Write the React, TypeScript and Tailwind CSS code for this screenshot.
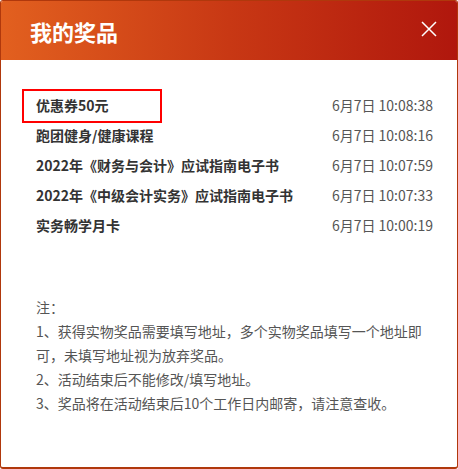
import React from "react";

const prizes = [
  { name: "优惠券50元", time: "6月7日 10:08:38" },
  { name: "跑团健身/健康课程", time: "6月7日 10:08:16" },
  { name: "2022年《财务与会计》应试指南电子书", time: "6月7日 10:07:59" },
  { name: "2022年《中级会计实务》应试指南电子书", time: "6月7日 10:07:33" },
  { name: "实务畅学月卡", time: "6月7日 10:00:19" },
];

export default function App() {
  return (
    <div
      className="w-[458px] h-[469px] overflow-hidden rounded-[3px] border border-b-2 border-[#b0380c] bg-white flex flex-col"
      style={{ fontFamily: '"Microsoft YaHei", "Noto Sans CJK SC", "Noto Sans", sans-serif' }}
    >
      <div className="h-[59px] shrink-0 flex items-center justify-between pl-[29px] pr-[20px] bg-[linear-gradient(90deg,#e2601f_0%,#c83814_50%,#b0170d_100%)]">
        <span className="text-[22px] font-bold text-white leading-none tracking-[0px]">我的奖品</span>
        <svg width="16" height="16" viewBox="0 0 16 16" className="mt-[-4px]">
          <path d="M1 1 L15 15 M15 1 L1 15" stroke="white" strokeWidth="1.5" fill="none" />
        </svg>
      </div>
      <div className="flex-1 rounded-b-[4px] bg-white pl-[35px] pr-[24px] pt-[30px]">
        <div className="flex flex-col">
          {prizes.map((p, i) => (
            <div key={i} className="relative h-[30px] flex items-center justify-between text-[14px]">
              {i === 0 && (
                <div className="absolute left-[-14px] top-[-1px] w-[140px] h-[34px] border-[2.5px] border-[#ff0000]" />
              )}
              <span className="font-bold text-[#333333]">{p.name}</span>
              <span className="text-[#555555]">{p.time}</span>
            </div>
          ))}
        </div>
        <div className="mt-[55px] text-[14px] leading-[24px] text-[#555555] pr-[4px]">
          <p>注：</p>
          <p>1、获得实物奖品需要填写地址，多个实物奖品填写一个地址即可，未填写地址视为放弃奖品。</p>
          <p>2、活动结束后不能修改/填写地址。</p>
          <p>3、奖品将在活动结束后10个工作日内邮寄，请注意查收。</p>
        </div>
      </div>
    </div>
  );
}
